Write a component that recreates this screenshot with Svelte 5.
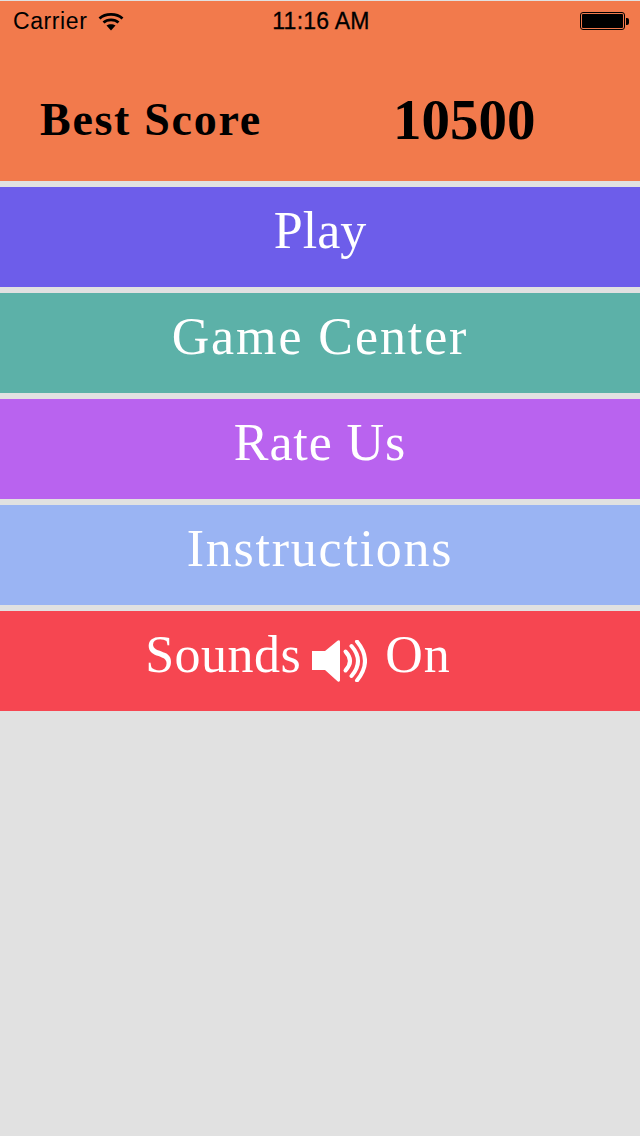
<script>
  const rows = [
    { label: 'Play', color: '#6d5dea', spacing: 0 },
    { label: 'Game Center', color: '#5cb1a8', spacing: 1.9 },
    { label: 'Rate Us', color: '#b963ef', spacing: 0.9 },
    { label: 'Instructions', color: '#9ab4f3', spacing: 1.75 }
  ];
</script>

<div class="screen">
  <header class="score">
    <div class="status">
      <div class="status-left">
        <span class="carrier">Carrier</span>
        <svg class="wifi" width="26" height="20" viewBox="0 0 26 20">
          <path d="M1.500 7.500C7.500 2 18.500 2 24.500 7.500" fill="none" stroke="#000" stroke-width="2.800" />
          <path d="M5.500 11.500C9.500 8 16.500 8 20.500 11.500" fill="none" stroke="#000" stroke-width="2.800" />
          <path d="M13 19.500L8.500 14.500C11 12.700 15 12.700 17.500 14.500Z" fill="#000" />
        </svg>
      </div>
      <span class="time">11:16 AM</span>
      <div class="battery">
        <div class="battery-body"><div class="battery-fill"></div></div>
        <div class="battery-tip"></div>
      </div>
    </div>
    <div class="score-line">
      <span class="score-label">Best Score</span>
      <span class="score-value">10500</span>
    </div>
  </header>

  <nav class="menu">
    {#each rows as row}
      <button class="row" style="background: {row.color}; letter-spacing: {row.spacing}px">{row.label}</button>
    {/each}
    <button class="row sounds">
      <span class="sounds-word">Sounds</span>
      <svg class="speaker" width="55" height="42" viewBox="0 0 55 42">
        <path d="M0 11H13L25.500 0.800C26.800 -0.200 28 0.300 28 2V40C28 41.700 26.800 42.200 25.500 41.200L13 30H0Z" fill="#fff" />
        <path d="M33.500 11.500Q42.500 21 33.500 30.500" fill="none" stroke="#fff" stroke-width="4" stroke-linecap="round" />
        <path d="M39.500 6Q52.500 21 39.500 36" fill="none" stroke="#fff" stroke-width="4" stroke-linecap="round" />
        <path d="M45 1.500Q61 21 45 40.500" fill="none" stroke="#fff" stroke-width="4" stroke-linecap="round" />
      </svg>
      <span class="on-word">On</span>
    </button>
  </nav>
</div>

<style>
  :global(body) {
    margin: 0;
    background: #e1e1e1;
  }

  .screen {
    width: 640px;
    height: 1136px;
    background: #e1e1e1;
    padding-top: 1px;
    box-sizing: border-box;
    overflow: hidden;
  }

  .score {
    height: 180px;
    background: #f27a4c;
    color: #000;
    display: flex;
    flex-direction: column;
  }

  .status {
    height: 40px;
    padding: 0 11px 0 13px;
    display: grid;
    grid-template-columns: 1fr auto 1fr;
    align-items: center;
    font-family: "Liberation Sans", sans-serif;
    font-size: 23px;
  }

  .status-left {
    display: flex;
    align-items: center;
    gap: 11px;
  }

  .carrier {
    letter-spacing: 0.6px;
  }

  .time {
    letter-spacing: 0.25px;
    -webkit-text-stroke: 0.3px #000;
  }

  .battery {
    display: flex;
    align-items: center;
    justify-content: flex-end;
  }

  .battery-body {
    width: 41px;
    height: 14px;
    border: 1px solid #000;
    border-radius: 3px;
    padding: 1px;
  }

  .battery-fill {
    height: 100%;
    background: #000;
    border-radius: 1px;
  }

  .battery-tip {
    width: 3px;
    height: 7px;
    background: #000;
    border-radius: 0 2px 2px 0;
    margin-left: 1px;
  }

  .score-line {
    flex: 1;
    display: flex;
    align-items: center;
    font-family: "Liberation Serif", serif;
    font-weight: 700;
    padding-left: 40px;
    padding-top: 16px;
  }

  .score-label {
    font-size: 46px;
    width: 353px;
    letter-spacing: 1.7px;
  }

  .score-value {
    font-size: 57px;
  }

  .menu {
    display: flex;
    flex-direction: column;
    gap: 6px;
    margin-top: 6px;
  }

  .row {
    height: 100px;
    border: 0;
    padding: 0 0 14px;
    color: #fff;
    font-family: "Liberation Serif", serif;
    font-size: 52px;
    display: flex;
    align-items: center;
    justify-content: center;
  }

  .sounds {
    background: #f64651;
    padding-right: 44px;
    gap: 11px;
  }

  .sounds-word {
    letter-spacing: 0.5px;
  }

  .on-word {
    letter-spacing: 1px;
  }

  .speaker {
    margin-top: 14px;
    margin-right: 7px;
  }
</style>
